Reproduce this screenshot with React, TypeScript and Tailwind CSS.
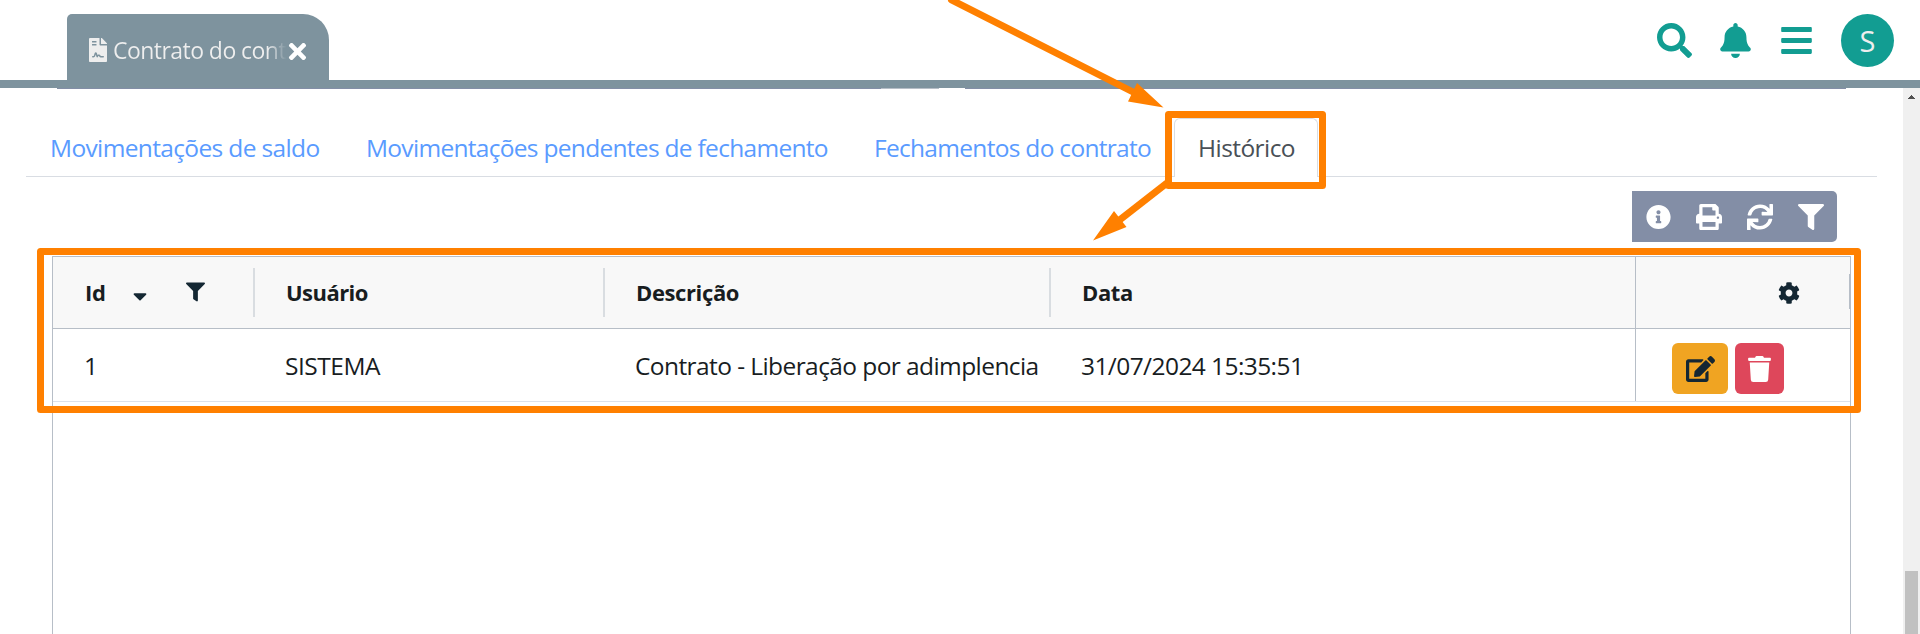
import type { ReactNode } from "react";
import {
  FaBars,
  FaBell,
  FaCaretDown,
  FaCog,
  FaEdit,
  FaFileContract,
  FaFilter,
  FaInfoCircle,
  FaPrint,
  FaSearch,
  FaSync,
  FaTimes,
  FaTrash,
} from "react-icons/fa";

function TopBar() {
  return (
    <header className="flex h-20 shrink-0 items-start justify-between pt-[14px] pr-[26px] pl-[67px]">
      <div className="flex h-[66px] w-[262px] items-center rounded-tl-[5px] rounded-tr-[26px] bg-[#7e939e] pl-[22px] text-[#eeeeee]">
        <FaFileContract className="mt-[5px] h-6 w-[18px] shrink-0" />
        <span className="mt-[5px] ml-[6px] h-8 w-[175px] bg-linear-to-r from-[#eeeeee] from-88% to-[#7e939e] to-99% bg-clip-text text-[23px] leading-8 tracking-[-0.55px] whitespace-nowrap text-transparent">
          Contrato do cont
        </span>
        <FaTimes className="mt-[9px] -ml-[3px] h-[25px] w-[25px] shrink-0 text-white" />
      </div>
      <nav className="flex h-[53px] items-center text-[#129d92]">
        <FaSearch className="h-[35px] w-[35px]" />
        <FaBell className="ml-[28px] h-[35px] w-[31px]" />
        <FaBars className="ml-[30px] h-[35px] w-[31px]" />
        <span className="ml-[29px] flex h-[53px] w-[53px] items-center justify-center rounded-full bg-[#129d92] text-[29px] text-[#eeeeee]">
          S
        </span>
      </nav>
    </header>
  );
}

function Tabs() {
  return (
    <div className="ml-[26px] flex h-[59px] w-[1851px] border-b border-[#d9dde3] text-[24.5px] leading-[59px] whitespace-nowrap text-[#5a9bff]">
      <span className="w-[316px] pl-[24px] tracking-[-0.64px]">Movimentações de saldo</span>
      <span className="w-[508px] pl-[24px] tracking-[-0.7px]">Movimentações pendentes de fechamento</span>
      <span className="w-[324px] pl-[24px] tracking-[-0.7px]">Fechamentos do contrato</span>
      <span className="h-[59px] w-[144px] rounded-t-[6px] border border-b-0 border-[#d9dde3] bg-white pl-[23px] leading-[57px] tracking-[-0.56px] text-[#495057]">
        Histórico
      </span>
    </div>
  );
}

function Toolbar() {
  return (
    <div className="mt-[14px] ml-[1632px] flex h-[51px] w-[205px] items-center justify-between rounded-r-[5px] bg-[#838ea6] pr-[13px] pl-[14px] text-white">
      <FaInfoCircle className="h-[26px] w-[25px]" />
      <FaPrint className="h-[26px] w-[26px]" />
      <FaSync className="h-[26px] w-[26px]" />
      <FaFilter className="h-[26px] w-[26px]" />
    </div>
  );
}

function HeaderCell({ width, children }: { width: string; children: ReactNode }) {
  return (
    <div className={`flex h-full shrink-0 items-center ${width}`}>
      {children}
      <span className="ml-auto h-[49px] w-[2px] bg-[#d9dde1]" />
    </div>
  );
}

function Grid() {
  return (
    <section className="mt-[14px] ml-[52px] flex w-[1799px] grow flex-col border border-b-0 border-[#b7bec7] whitespace-nowrap text-[#181d1f]">
      <div className="flex h-[72px] shrink-0 items-center border-b border-[#b7bec7] bg-[#f8f8f8] text-[22px] font-bold">
        <HeaderCell width="w-[202px] pl-[32px]">
          <span className="tracking-[-0.4px]">Id</span>
          <FaCaretDown className="mt-[6px] ml-[28px] h-[22px] w-[14px] text-[#142733]" />
          <FaFilter className="-mt-px ml-[39px] h-[20px] w-[19px] text-[#142733]" />
        </HeaderCell>
        <HeaderCell width="w-[350px] pl-[31px]">
          <span className="tracking-[-0.54px]">Usuário</span>
        </HeaderCell>
        <HeaderCell width="w-[446px] pl-[31px]">
          <span className="tracking-[-0.38px]">Descrição</span>
        </HeaderCell>
        <div className="w-[584px] pl-[31px] tracking-[-0.4px]">Data</div>
        <div className="flex h-full grow items-center border-l border-[#b7bec7]">
          <FaCog className="ml-[142px] h-[22px] w-[22px] text-[#142733]" />
          <span className="mb-[2px] ml-auto h-[35px] w-px bg-[#b7bec7]" />
        </div>
      </div>
      <div className="flex h-[73px] shrink-0 items-center border-b border-[#dde2eb] text-[24.5px]">
        <div className="w-[202px] pt-[2px] pl-[31px]">1</div>
        <div className="w-[350px] pt-[2px] pl-[30px] tracking-[-0.48px]">SISTEMA</div>
        <div className="w-[446px] pt-[2px] pl-[30px] tracking-[-0.58px]">Contrato - Liberação por adimplencia</div>
        <div className="w-[584px] pt-[2px] pl-[30px] tracking-[-0.58px]">31/07/2024 15:35:51</div>
        <div className="flex h-full grow items-start border-l border-[#b7bec7] pt-[14px] pl-[36px]">
          <button className="flex h-[51px] w-[56px] items-center justify-center rounded-[6px] bg-[#f0a422] text-[#142733]">
            <FaEdit className="h-[26px] w-[29px]" />
          </button>
          <button className="ml-[7px] flex h-[51px] w-[49px] items-center justify-center rounded-[6px] bg-[#de475b] text-white">
            <FaTrash className="h-[26px] w-[23px]" />
          </button>
        </div>
      </div>
    </section>
  );
}

function Annotations() {
  return (
    <svg className="pointer-events-none absolute inset-0 h-full w-full" viewBox="0 0 1920 634" fill="none" stroke="#ff8000" strokeWidth="7" strokeLinejoin="round">
      <rect x="1168.5" y="114.5" width="154" height="71" />
      <rect x="40.5" y="251.5" width="1817" height="158" />
      <path d="M951.5 0 1136 93.5" strokeLinecap="round" />
      <path d="M1167 183 1117 222" />
      <path d="M1163.500 107.5 1137 83 1128 101.500Z M1093 240.5 1114 211 1126.500 227Z" fill="#ff8000" stroke="none" />
    </svg>
  );
}

export default function App() {
  return (
    <div className="relative flex h-[634px] w-[1920px] flex-col overflow-hidden bg-white font-['Open_Sans','Noto_Sans',sans-serif]">
      <TopBar />
      <div className="h-2 shrink-0 bg-[#7e939e]" />
      <div className="flex min-h-0 grow">
        <main className="flex w-[1903px] flex-col">
          <div className="flex h-px shrink-0 pl-[57px]">
            <span className="w-[824px] bg-[#838ea6]" />
            <span className="w-[58px] bg-[#b7bec7]" />
            <span className="ml-[26px] w-[881px] bg-[#838ea6]" />
          </div>
          <div className="mt-[29px] flex grow flex-col">
            <Tabs />
            <Toolbar />
            <Grid />
          </div>
        </main>
        <aside className="flex w-[17px] flex-col items-center bg-[#f0f0f0] pt-[7px]">
          <svg className="h-1 w-[7px]" viewBox="0 0 7 4" fill="#505050" shapeRendering="crispEdges">
            <path d="M3 0h1v1h1v1h1v1h1v1H0V3h1V2h1V1h1z" />
          </svg>
          <div className="mt-[472px] w-[13px] grow bg-[#c1c1c1]" />
        </aside>
      </div>
      <Annotations />
    </div>
  );
}
